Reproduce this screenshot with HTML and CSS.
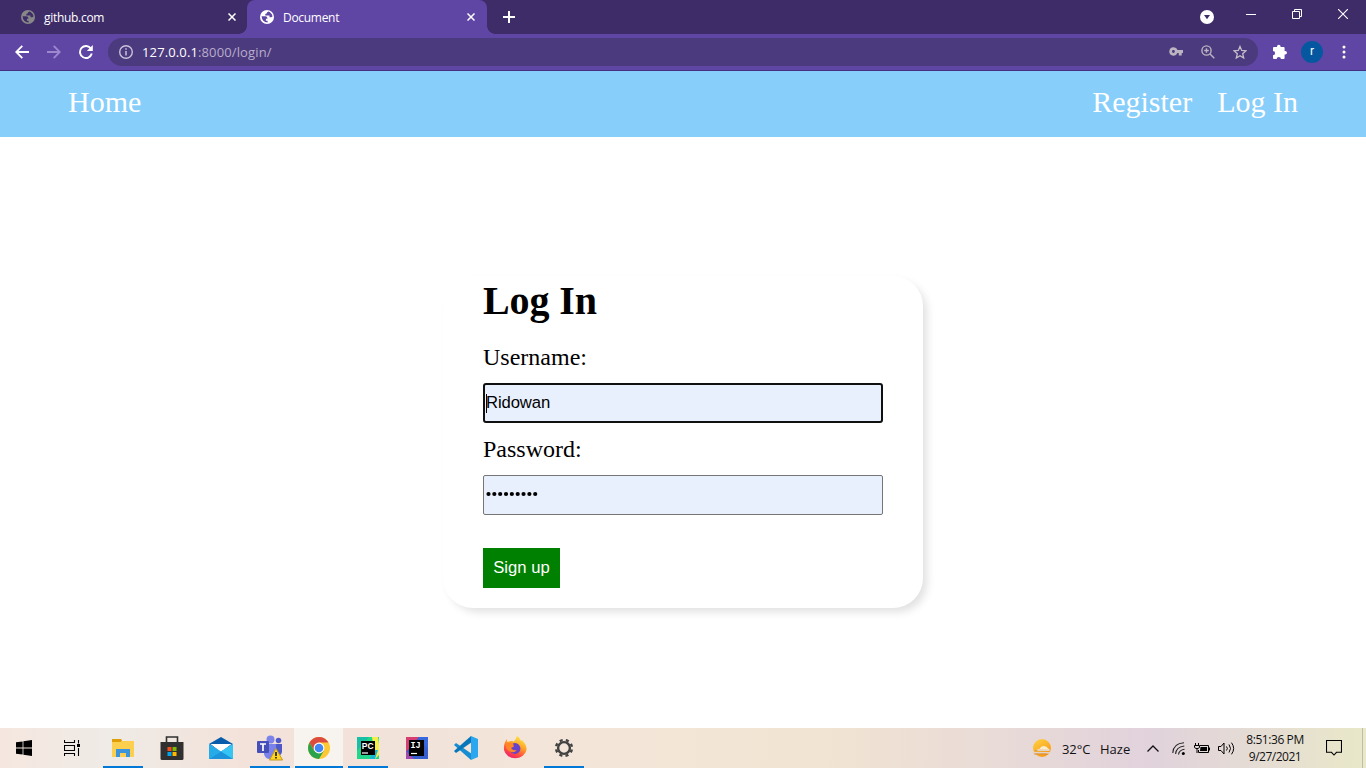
FILE: index.html
```html
<!DOCTYPE html>
<html lang="en">
<head>
<meta charset="UTF-8">
<title>Document</title>
<link rel="stylesheet" href="styles.css">
</head>
<body>
<svg class="defs" width="0" height="0">
  <symbol id="globe" viewBox="0 0 14 14"><circle cx="7" cy="7" r="7" fill="currentColor"/><path d="M1.6 6.2h3.6q2.2 0 2.2 1.7v.8H5.9v2H7.6v1.7Q2 12 1.6 6.2zM8.3 1.6Q7 2 6.6 3.4L5.3 4v1.5h4.2v1.7h1.8l1.2-.8Q12 3 8.3 1.6z" fill="var(--tab)"/></symbol>
  <symbol id="close" viewBox="0 0 8 8"><path d="M.5.5l7 7m0-7l-7 7" stroke="#fff" stroke-width="1.5"/></symbol>
</svg>

<header class="tabs">
  <div class="tab tab-first">
    <svg class="fav dim" width="14" height="14"><use href="#globe"/></svg>
    <span>github.com</span>
    <svg class="x" width="8" height="8"><use href="#close"/></svg>
  </div>
  <div class="tab tab-active">
    <svg class="fav" width="14" height="14"><use href="#globe"/></svg>
    <span>Document</span>
    <svg class="x" width="8" height="8"><use href="#close"/></svg>
  </div>
  <svg class="plus" width="12" height="12" viewBox="0 0 12 12"><path d="M6 0v12M0 6h12" stroke="#fff" stroke-width="2"/></svg>
  <div class="window-buttons">
    <svg width="14" height="14" viewBox="0 0 14 14"><circle cx="7" cy="7" r="7" fill="#fff"/><path d="M4 5h6L7 9.2z" fill="#3e2c69"/></svg>
    <svg class="min" width="10" height="10" viewBox="0 0 10 10"><path d="M0 5.5h10" stroke="#fff"/></svg>
    <svg class="max" width="10" height="10" viewBox="0 0 10 10"><path d="M.5 2.5h7v7h-7zM2.5 2.5v-2h7v7h-2" stroke="#fff" fill="none"/></svg>
    <svg class="shut" width="10" height="10" viewBox="0 0 10 10"><path d="M0 0l10 10M10 0L0 10" stroke="#fff" stroke-width="1.1"/></svg>
  </div>
</header>

<div class="toolbar">
  <svg width="14" height="14" viewBox="0 0 14 14"><path d="M14 7H1.5M7.3.8L1.2 7l6.1 6.2" fill="none" stroke="#fff" stroke-width="1.8"/></svg>
  <svg width="14" height="14" viewBox="0 0 14 14"><path d="M0 7h12.5M6.7.8L12.8 7l-6.1 6.2" fill="none" stroke="#9c88ce" stroke-width="1.8"/></svg>
  <svg width="14" height="14" viewBox="0 0 14 14"><path d="M12 3.7A6 6 0 1 0 12.8 8.6" fill="none" stroke="#fff" stroke-width="1.9"/><path d="M13.8 0v6H7.8z" fill="#fff"/></svg>
  <div class="omnibox">
    <svg width="14" height="14" viewBox="0 0 14 14"><circle cx="7" cy="7" r="6.3" fill="none" stroke="#c9c2da" stroke-width="1.4"/><path d="M7 6v4.5M7 3.2v1.6" stroke="#c9c2da" stroke-width="1.5"/></svg>
    <span class="url"><b>127.0.0.1</b>:8000/login/</span>
    <svg width="14" height="9" viewBox="0 0 14 9"><path fill="#bcb4c0" fill-rule="evenodd" d="M4.4.2a4.2 4.2 0 0 1 4 2.8H14v3h-1.3v2.5H9.8V6H8.4A4.2 4.2 0 1 1 4.4.2zm0 2.8a1.4 1.4 0 1 0 0 2.9 1.4 1.4 0 0 0 0-2.9z"/></svg>
    <svg class="mag" width="14" height="14" viewBox="0 0 14 14"><g fill="none" stroke="#bcb4c0" stroke-width="1.4"><circle cx="5.5" cy="5.5" r="4.6"/><path d="M9 9l4.3 4.3M5.5 3.2v4.6M3.2 5.5h4.6"/></g></svg>
    <svg width="14" height="14" viewBox="0 0 14 14"><path d="M7 1.4l1.7 4 4.3.4-3.3 2.9 1 4.3L7 10.7 3.3 13l1-4.3L1 5.8l4.3-.4z" fill="none" stroke="#c3bcc9" stroke-width="1.3"/></svg>
  </div>
  <svg class="puzzle" width="15" height="15" viewBox="0 0 15 15"><path fill="#fff" d="M2 3h3V2.6a1.8 1.8 0 0 1 3.6 0V3h3q1 0 1 1v3h.6a1.8 1.8 0 0 1 0 3.6h-.6V14q0 1-1 1H8.9a2.1 2.1 0 0 0-4.2 0H2q-1 0-1-1v-2.7a2.1 2.1 0 0 0 0-4.2V4q0-1 1-1z"/></svg>
  <span class="avatar">r</span>
  <svg class="dots" width="4" height="14" viewBox="0 0 4 14"><g fill="#fff"><circle cx="2" cy="2" r="1.5"/><circle cx="2" cy="7" r="1.5"/><circle cx="2" cy="12" r="1.5"/></g></svg>
</div>

<nav class="site-nav">
  <a>Home</a>
  <div><a>Register</a><a>Log In</a></div>
</nav>

<main class="page">
  <form class="card">
    <h1>Log In</h1>
    <label>Username:</label>
    <div class="field focused"><i class="caret"></i>Ridowan</div>
    <label>Password:</label>
    <div class="field"><svg class="bullets" width="54" height="6" viewBox="0 0 54 6"><path d="M2.5 3h.01m5.83 0h.01m5.83 0h.01m5.83 0h.01m5.83 0h.01m5.83 0h.01m5.83 0h.01m5.83 0h.01m5.83 0h.01" stroke="#000" stroke-width="4.2" stroke-linecap="round"/></svg></div>
    <button type="button">Sign up</button>
  </form>
</main>

<footer class="taskbar">
  <div class="cell start"><svg width="16" height="16" viewBox="0 0 16 16"><path d="M0 2.3L6.6 1.4v6.2H0zM7.4 1.3L16 0v7.6H7.4zM0 8.4h6.6v6.2L0 13.7zM7.4 8.4H16V16l-8.6-1.3z"/></svg></div>
  <div class="cell view"><svg width="16" height="16" viewBox="0 0 16 16"><path d="M.5 0v2.5h10V0M.5 16v-2.5h10V16M.5 5.5h10v5H.5zM14.5 0v3.5m0 4.5v8" fill="none" stroke="#000" stroke-width="1.1"/><path d="M13 4h3v3h-3z"/></svg></div>
  <div class="cell open"><svg width="22" height="20" viewBox="0 0 22 20"><path d="M0 1h9l1 2h12v16H0z" fill="#fccf4e"/><path d="M0 1h9l1 1.5L8.5 4H0z" fill="#df9d08"/><path d="M4 19v-8h14v8h-4v-4H8v4z" fill="#3b94dc"/></svg></div>
  <div class="cell"><svg width="24" height="24" viewBox="0 0 24 24"><path d="M6.5 7V1h11v6" fill="none" stroke="#303030" stroke-width="1.6"/><path d="M.5 6h23v16.5q0 1.5-1.5 1.5H2Q.5 24 .5 22.5z" fill="#303030"/><path fill="#f25022" d="M7.5 11h4v4h-4z"/><path fill="#7fba00" d="M12.5 11h4v4h-4z"/><path fill="#00a4ef" d="M7.5 16h4v4h-4z"/><path fill="#ffb900" d="M12.5 16h4v4h-4z"/></svg></div>
  <div class="cell"><svg width="24" height="22" viewBox="0 0 24 22"><path d="M0 7L12 0l12 7-12 8z" fill="#075cac"/><path d="M1.5 7h21L12 15z" fill="#fff"/><path d="M0 7l12 7.5L24 7v15H0z" fill="#25abe8"/><path d="M24 7v15H0z" fill="#36c4f4"/><path d="M0 22l12-7.6L24 22z" fill="#1b94dc"/></svg></div>
  <div class="cell open"><svg width="26" height="26" viewBox="0 0 26 26"><circle cx="13.5" cy="4.5" r="4" fill="#7b83eb"/><circle cx="21.5" cy="5.5" r="2.8" fill="#5059c9"/><path d="M17 9h8v8q-1 4-5 4z" fill="#5059c9"/><path d="M7 9h12v10q-1 5-6 5t-6-5z" fill="#7b83eb"/><rect y="6" width="12" height="12" rx="1" fill="#464eb8"/><path d="M3 9h6M6 9v7" stroke="#fff" stroke-width="1.7"/><path d="M19 13.5L25.5 25h-13z" fill="#ffd51d" stroke="#c49a20"/><path d="M19 17v4m0 1v1.5" stroke="#222" stroke-width="1.7"/></svg></div>
  <div class="cell open current"><svg width="22" height="22" viewBox="0 0 22 22"><circle cx="11" cy="11" r="11" fill="#fcc934"/><path d="M1.5 5.5A11 11 0 0 1 20.5 5.5H11L6.2 13.7z" fill="#dd4b3e"/><path d="M1.5 5.5A11 11 0 0 0 11 22l4.8-8.2H6.2z" fill="#2ba24c"/><circle cx="11" cy="11" r="5.4" fill="#fff"/><circle cx="11" cy="11" r="4.3" fill="#4285f4"/></svg></div>
  <div class="cell open"><svg width="22" height="22" viewBox="0 0 22 22"><path fill="#21d789" d="M0 0h22v22H0z"/><path d="M0 0h12L0 14z" fill="#18bfa5"/><path d="M15 0h6l1 7v11l-4 4z" fill="#f5ed48"/><path d="M16 13h5l-3 9h-5z" fill="#12b7dc"/><path d="M4 4h14v14H4z"/><text x="4.8" y="12" class="logo-text pc">PC</text><path d="M5 16h6" stroke="#fff" stroke-width="1.2"/></svg></div>
  <div class="cell"><svg width="22" height="22" viewBox="0 0 22 22"><path fill="#365ece" d="M0 0h22v22H0z"/><path d="M0 0h13L0 15z" fill="#d63e73"/><path d="M0 22v-8l8 8z" fill="#a14bae"/><path d="M22 0v12L12 0z" fill="#3868dd"/><path d="M3 3h15v16H3z"/><text x="4.5" y="11.3" class="logo-text">IJ</text><path d="M5 16.5h6" stroke="#fff" stroke-width="1.2"/></svg></div>
  <div class="cell"><svg width="24" height="24" viewBox="0 0 24 24"><path d="M2 7L0 9l17 15 1-6z" fill="#168ed1"/><path d="M2 17l-2-2L17 0l1 6z" fill="#0876b9"/><path d="M17 0l7 3v18l-7 3z" fill="#2aa7ee"/></svg></div>
  <div class="cell"><svg width="24" height="24" viewBox="0 0 24 24"><defs><linearGradient id="fx" x1=".8" y1="0" x2=".3" y2="1"><stop stop-color="#fff04b"/><stop offset=".45" stop-color="#ff9c25"/><stop offset=".75" stop-color="#ff4b42"/><stop offset="1" stop-color="#ed1e70"/></linearGradient></defs><path d="M14 0q3 1.5 4 5l1-1q5 5 4.5 10A11.5 10.5 0 0 1 1 14Q.5 7 4 3v3l4-1q2-1 2 1 3-2 4-6z" fill="url(#fx)"/><circle cx="12" cy="12.5" r="5.4" fill="#6842c8"/><path d="M4 7l6 .5 1 3-3 1.5q2 3 6 2-3 4-8 1T4 7z" fill="#ff8526"/></svg></div>
  <div class="cell open"><svg width="20" height="20" viewBox="0 0 20 20"><g fill="none" stroke="#424242"><circle cx="10" cy="10" r="5.9" stroke-width="2.4"/><circle cx="10" cy="10" r="8" stroke-width="2.4" stroke-dasharray="3.1 3.183" stroke-dashoffset="-1.6"/></g></svg></div>
  <div class="tray">
    <svg class="weather" width="20" height="20" viewBox="0 0 20 20"><defs><linearGradient id="sun" x2=".6" y2="1"><stop stop-color="#ffd344"/><stop offset="1" stop-color="#f79a18"/></linearGradient></defs><circle cx="10" cy="10" r="9" fill="url(#sun)"/><path d="M4.5 11.5q2-1 3-.5 1.500-3 4.500-3 3 0 4 2.500 1.500.2 1.500 1.500z" fill="#fbeccb"/><path d="M2.500 12.700h13" stroke="#c99258" stroke-width=".8"/><path d="M.8 14.700h17.500M6 12.300h11" stroke="#e3d3c8" stroke-width="1.600" stroke-linecap="round"/><path d="M2 16h13" stroke="#c98a4c" stroke-width=".8"/></svg>
    <span class="temp">32°C</span><span class="haze">Haze</span>
    <svg class="up" width="12" height="7" viewBox="0 0 12 7"><path d="M.5 6.5L6 1l5.5 5.5" fill="none" stroke="#111" stroke-width="1.3"/></svg>
    <svg class="wifi" width="13" height="13" viewBox="0 0 13 13"><g fill="none" stroke="#222" stroke-width="1.1"><path d="M.8 11Q1.3 1.5 12 .8M3.6 12Q4 5 12.3 4M6.500 12.500Q7 8 12.500 7.200"/></g><circle cx="11.3" cy="11.4" r="1.5"/></svg>
    <svg class="battery" width="17" height="11" viewBox="0 0 17 11"><path d="M6 2.5h8.5v7h-10V7M15.5 4.5v3M1.5 0v2m3-2v2M.5 2.5h5v2l-1.5 1H2L.5 4.5zM3 5.5V10" fill="none" stroke="#000"/><path d="M6.5 4H13v4H6z"/></svg>
    <svg class="sound" width="17" height="13" viewBox="0 0 17 13"><g fill="none" stroke="#000"><path d="M.5 4.5H3L6 1v11L3 8.5H.5zM8.5 4.5q1.7 2 0 4M11 2.5q3 4 0 8M13.5.7q4.3 5.8 0 11.6"/></g></svg>
    <div class="clock"><span>8:51:36 PM</span><span class="date">9/27/2021</span></div>
    <svg class="note" width="16" height="16" viewBox="0 0 16 16"><path d="M.5.5h15v11.8h-5L8 15l-2.5-2.7h-5z" fill="none" stroke="#000" stroke-width="1.1"/></svg>
    <i class="edge"></i>
  </div>
</footer>
</body>
</html>
```
FILE: styles.css
```css
* { box-sizing: border-box; }
body { margin: 0; width: 1366px; height: 768px; overflow: hidden; display: flex; flex-direction: column; background: #fff; font-family: "Liberation Serif", serif; }
svg { display: block; flex: none; }
.defs { position: absolute; }

.tabs { --tab: #3e2c69; height: 34px; flex: none; display: flex; background: #3e2c69; color: #fff; font: 12px "Open Sans", sans-serif; }
.tab { display: flex; align-items: center; height: 34px; }
.tab span { letter-spacing: -.3px; }
.tab-first { width: 247px; padding: 0 11px 0 21px; }
.tab-active { --tab: #5f45a4; position: relative; width: 240px; padding: 0 12px 0 13px; background: #5f45a4; border-radius: 8px 8px 0 0; }
.tab-active::before, .tab-active::after { content: ""; position: absolute; bottom: 0; width: 8px; height: 8px; }
.tab-active::before { left: -8px; background: radial-gradient(circle at 0 0, #3e2c69 7.5px, #5f45a4 8px); }
.tab-active::after { right: -8px; background: radial-gradient(circle at 100% 0, #3e2c69 7.5px, #5f45a4 8px); }
.fav { color: #fff; margin-right: 9px; }
.dim { color: #888; }
.x { margin-left: auto; }
.plus { margin: 11px 0 0 16px; }
.window-buttons { display: flex; margin-left: auto; padding: 9px 18px 0 0; align-items: flex-start; height: 34px; }
.window-buttons svg { margin-top: 1px; }
.window-buttons .min { margin: 0 0 0 32px; }
.window-buttons .max { margin: 0 0 0 36px; }
.window-buttons .shut { margin: 0 0 0 36px; }

.toolbar { height: 37px; flex: none; display: flex; align-items: center; gap: 18px; padding: 0 20px 1px 15px; background: #5f45a4; border-bottom: 1px solid #452f80; }
.omnibox { width: 1150px; height: 28px; margin-left: -3px; border-radius: 14px; background: #4c3a7e; display: flex; align-items: center; gap: 18px; padding: 0 11px; }
.url { margin-left: -9px; margin-right: auto; color: #b7aecb; font: 13px "Open Sans", sans-serif; letter-spacing: .13px; }
.url b { font-weight: 400; color: #fff; }
.puzzle { margin-left: -4px; }
.avatar { width: 22px; height: 22px; margin-left: -4px; border-radius: 50%; background: #0558a0; color: #fff; font: 12px/21px Roboto, sans-serif; text-align: center; }
.dots { margin: 0 0 0 1px; }

.site-nav { height: 66px; flex: none; padding: 0 68px 4px; display: flex; justify-content: space-between; align-items: center; background: #87cefa; color: #fff; font-size: 30px; line-height: 62px; }
.site-nav div { display: flex; gap: 25px; }

.page { height: 591px; flex: none; display: flex; justify-content: center; align-items: flex-start; padding-top: 139px; }
.card { width: 480px; height: 332px; padding: 0 40px; border-radius: 30px; background: #fff; box-shadow: 5px 5px 8px -1px rgba(0, 0, 0, .12); display: flex; flex-direction: column; align-items: flex-start; }
h1 { margin: 2px 0 19px; font-size: 40px; line-height: 46px; letter-spacing: -.1px; }
label { font-size: 24px; line-height: 28px; margin-bottom: 12px; }
.field { width: 400px; height: 40px; flex: none; margin-bottom: 12px; display: flex; align-items: center; padding: 0 2px; border: 1px solid #767676; border-radius: 2px; background: #e8f0fe; font: 16.67px "Liberation Sans", sans-serif; letter-spacing: -.1px; }
.focused { border: 2px solid #101010; border-radius: 3px; padding: 0 1px; }
.caret { width: 1px; height: 19px; margin-right: -1px; background: #000; }
.bullets { margin-bottom: 2px; }
button { width: 77px; height: 40px; margin-top: 21px; padding: 0; border: 0; background: green; color: #fff; font: 16.67px "Liberation Sans", sans-serif; }

.taskbar { height: 40px; flex: none; display: flex; background: linear-gradient(90deg, #f5e7df, #efebe6 8%, #f3e2da 18%, #f2e3da 30%, #f3e6d8 46%, #f1e4d2 60%, #e8dad7 74%, #e1d2dc 84%, #e5dcd4 92%, #e9e8c8); }
.cell { width: 49px; display: flex; align-items: center; justify-content: center; border-bottom: 2px solid transparent; padding-top: 2px; }
.start { width: 48px; }
.view { width: 50px; padding-right: 2px; }
.open { background: linear-gradient(#0078d7, #0078d7) center bottom / 40px 2px no-repeat border-box; }
.current { background: linear-gradient(#0078d7, #0078d7) center bottom / 48px 2px no-repeat border-box, #f7f3ef; }
.logo-text { font: bold 8.5px "Liberation Mono", monospace; fill: #fff; }
.pc { font: bold 8.5px "Liberation Sans", sans-serif; }
.tray { margin-left: auto; display: flex; align-items: center; color: #111; font: 13px "Open Sans", sans-serif; }
.temp { margin: 1px 0 0 10px; width: 30px; white-space: nowrap; letter-spacing: -.1px; }
.haze { margin: 1px 0 0 8px; width: 32px; }
.up { margin-left: 15px; }
.wifi { margin-left: 13px; }
.battery { margin-left: 9px; }
.sound { margin-left: 7px; }
.clock { width: 70px; margin-left: 5px; display: flex; flex-direction: column; align-items: center; font-size: 12px; line-height: 17px; letter-spacing: -.42px; white-space: nowrap; }
.date { letter-spacing: -.5px; }
.note { margin-left: 16px; }
.edge { width: 1px; height: 40px; margin: 0 3px 0 20px; background: #bdbdab; }
```
